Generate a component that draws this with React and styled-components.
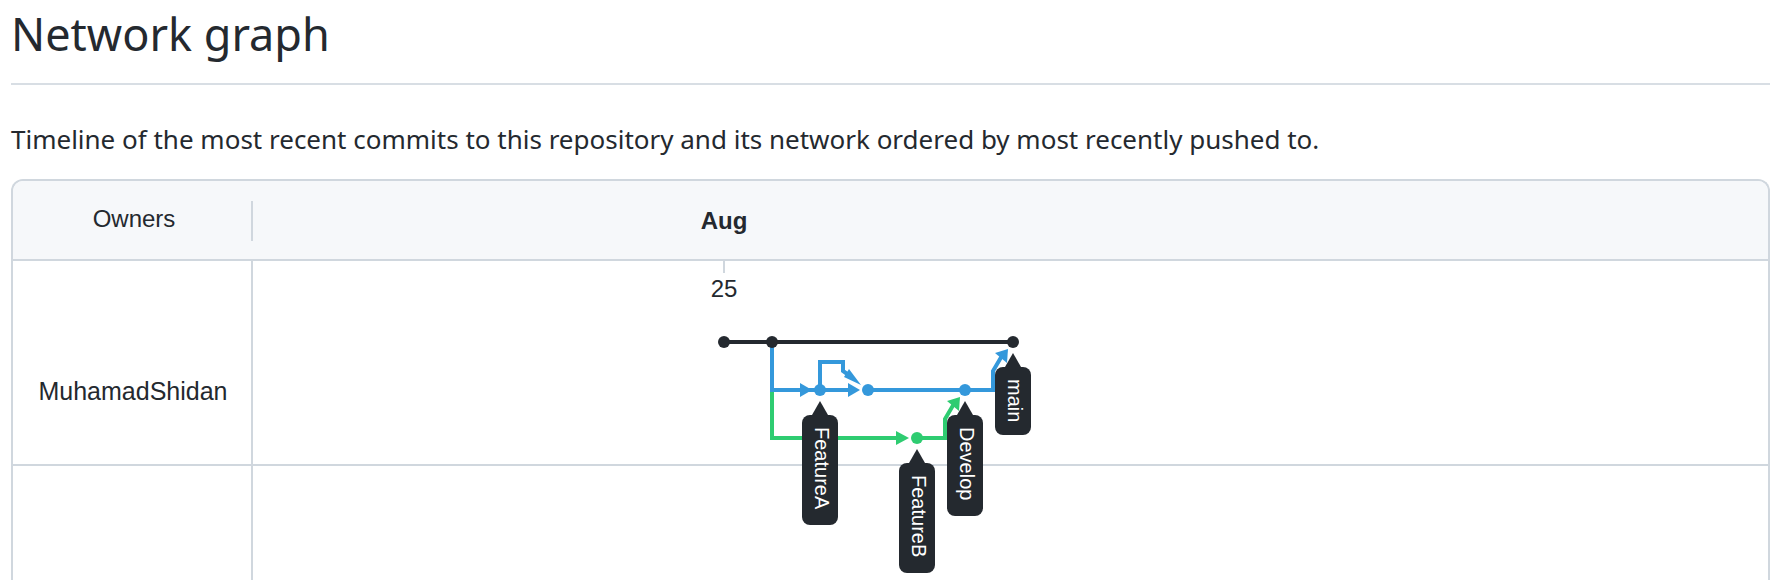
import React from "react";
import styled, { createGlobalStyle } from "styled-components";

const ink = "#24292f";
const line = "#d0d7de";
const blue = "#3498db";
const green = "#2ecc71";

const GlobalStyle = createGlobalStyle`
  *, *::before, *::after { box-sizing: border-box; }
  body {
    margin: 0;
    background: #ffffff;
    color: ${ink};
    font-family: "Liberation Sans", Arial, sans-serif;
  }
`;

const Page = styled.main`
  display: flex;
  flex-direction: column;
  height: 100vh;
  min-height: 500px;
  overflow: hidden;
  padding: 0 20px 0 11px;
`;

const Title = styled.h1`
  margin: 0;
  padding: 2px 0 17px;
  border-bottom: 2px solid #d8dee4;
  font-family: "Noto Sans", sans-serif;
  font-size: 45px;
  line-height: 64px;
  font-weight: 400;
`;

const Intro = styled.p`
  margin: 35px 0 21px;
  font-family: "Noto Sans", sans-serif;
  font-size: 26px;
  line-height: 38px;
  white-space: nowrap;
`;

const Network = styled.section`
  flex: 1;
  display: flex;
  flex-direction: column;
  border: 2px solid ${line};
  border-bottom: 0;
  border-radius: 12px 12px 0 0;
`;

const Row = styled.div`
  display: grid;
  grid-template-columns: 240px 1fr;
  flex: ${(p) => (p.$fill ? "1" : "none")};
  border-bottom: ${(p) => (p.$fill ? "0" : `2px solid ${line}`)};
`;

const HeaderRow = styled(Row)`
  height: 80px;
  padding-top: 20px;
  align-items: start;
  background: #f6f8fa;
  border-radius: 10px 10px 0 0;
`;

const OwnersHeading = styled.div`
  height: 40px;
  padding-left: 4px;
  border-right: 2px solid ${line};
  font-size: 24px;
  line-height: 36px;
  text-align: center;
`;

const Owner = styled.div`
  display: flex;
  align-items: center;
  justify-content: center;
  padding-top: ${(p) => (p.$first ? "56px" : "0")};
  padding-left: 2px;
  border-right: 2px solid ${line};
  font-size: 25px;
  line-height: 32px;
`;

const Track = styled.div`
  padding-left: 447px;
`;

const Month = styled.div`
  width: 48px;
  font-size: 24px;
  line-height: 40px;
  font-weight: 700;
  text-align: center;
`;

const Day = styled.div`
  display: flex;
  flex-direction: column;
  align-items: center;
  width: 48px;
  font-size: 24px;
  line-height: 32px;

  &::before {
    content: "";
    width: 2px;
    height: 12px;
    background: ${line};
  }
`;

const Canvas = styled.div`
  position: relative;
  width: 384px;
  height: 159px;
`;

const Lines = styled.svg`
  display: block;
  overflow: visible;
`;

const Tag = styled.div`
  position: absolute;
  left: ${(p) => p.$x - 18}px;
  top: ${(p) => p.$y + 25}px;
  width: 36px;
  height: ${(p) => p.$length}px;
  padding: 12px 0;
  border-radius: 8px;
  background: ${ink};
  color: #ffffff;
  font-size: 20px;
  line-height: 32px;
  writing-mode: vertical-rl;
  white-space: nowrap;

  &::before {
    content: "";
    position: absolute;
    top: -14px;
    left: 10px;
    border: solid transparent;
    border-width: 0 8px 14px;
    border-bottom-color: ${ink};
  }
`;

const commits = [
  { x: 24, y: 37, color: ink },
  { x: 72, y: 37, color: ink },
  { x: 313, y: 37, color: ink },
  { x: 120, y: 85, color: blue },
  { x: 168, y: 85, color: blue },
  { x: 265, y: 85, color: blue },
  { x: 217, y: 133, color: green },
];

const branches = [
  { name: "FeatureA", x: 120, y: 85, length: 110 },
  { name: "FeatureB", x: 217, y: 133, length: 110 },
  { name: "Develop", x: 265, y: 85, length: 101 },
  { name: "main", x: 313, y: 37, length: 68 },
];

function Graph() {
  return (
    <Canvas>
      <Lines width="384" height="159" role="img" aria-label="Commit graph">
        <g fill="none" strokeWidth="4">
          <path stroke={green} d="M72 85V133H200M217 133H245V114L255 97" />
          <path stroke={blue} d="M72 37V85H152M120 85V57H143V66L150 71M168 85H293V66L303 49" />
          <path stroke={ink} d="M24 37H313" />
        </g>
        <g fill={blue}>
          <path d="M100 78L112 85L100 92Z" />
          <path d="M148 78L160 85L148 92Z" />
          <path d="M149 64L161 80L144 72Z" />
          <path d="M308 44L307 58L295 48Z" />
        </g>
        <g fill={green}>
          <path d="M196 126L209 133L196 140Z" />
          <path d="M260 92L259 106L247 96Z" />
        </g>
        {commits.map((c) => (
          <circle key={`${c.x}-${c.y}`} cx={c.x} cy={c.y} r="6" fill={c.color} />
        ))}
      </Lines>
      {branches.map((b) => (
        <Tag key={b.name} $x={b.x} $y={b.y} $length={b.length}>
          {b.name}
        </Tag>
      ))}
    </Canvas>
  );
}

export default function App() {
  return (
    <>
      <GlobalStyle />
      <Page>
        <Title>Network graph</Title>
        <Intro>
          Timeline of the most recent commits to this repository and its network ordered by most
          recently pushed to.
        </Intro>
        <Network>
          <HeaderRow>
            <OwnersHeading>Owners</OwnersHeading>
            <Track>
              <Month>Aug</Month>
            </Track>
          </HeaderRow>
          <Row>
            <Owner $first>MuhamadShidan</Owner>
            <Track>
              <Day>25</Day>
              <Graph />
            </Track>
          </Row>
          <Row $fill>
            <Owner />
          </Row>
        </Network>
      </Page>
    </>
  );
}
